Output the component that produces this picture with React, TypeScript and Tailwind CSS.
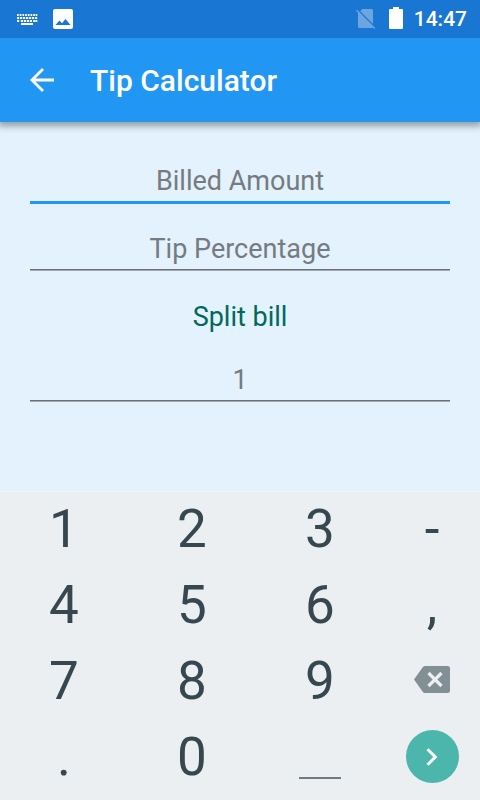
import React from "react";

function StatusBar() {
  return (
    <div className="relative z-10 flex h-[38px] items-center bg-[#1976d2] pl-4 pr-[13px] text-white">
      <svg className="h-[22px] w-[22px]" viewBox="0 0 22 22" fill="currentColor" aria-hidden="true">
        {[1, 3.7, 6.4, 9.1, 11.8, 14.5, 17.2, 19.6].map((x) => (
          <rect key={`a${x}`} x={x} y="6" width="1.7" height="2" />
        ))}
        {[1, 4, 7, 10, 13, 16, 19].map((x) => (
          <rect key={`b${x}`} x={x} y="9" width="2.2" height="2" />
        ))}
        {[1, 4.8, 7.8, 10.8, 13.8, 17.2].map((x) => (
          <rect key={`c${x}`} x={x} y="12" width="2.2" height="2" />
        ))}
        <rect x="19.6" y="12" width="1.7" height="2" />
        <rect x="5" y="15" width="12" height="2" />
      </svg>
      <svg className="ml-[15px] h-5 w-5" viewBox="0 0 20 20" aria-hidden="true">
        <rect width="20" height="20" rx="2" fill="#fff" />
        <path d="M2.5 16 L6.5 11.5 L9 14.3 L12.5 10 L17.5 16 Z" fill="#1976d2" />
      </svg>
      <svg className="ml-auto h-5 w-5" viewBox="0 0 20 20" aria-hidden="true">
        <path
          d="M6.5 0 H15.5 Q17 0 17 1.5 V15 L4.2 2.2 Z M2 3 L17.3 18.3 L16 19 H3.5 Q2 19 2 17.5 Z"
          fill="#6ca6e1"
        />
        <path d="M0.5 1.2 L18.8 19.5" stroke="#6ca6e1" strokeWidth="1.4" />
      </svg>
      <svg className="mb-[2px] ml-[13px] h-[22px] w-[14px]" viewBox="0 0 14 22" fill="currentColor" aria-hidden="true">
        <path d="M4 0 H10 V2 H13 Q14 2 14 3 V21 Q14 22 13 22 H1 Q0 22 0 21 V3 Q0 2 1 2 H4 Z" />
      </svg>
      <time className="ml-[11px] text-[21px] font-medium leading-6">14:47</time>
    </div>
  );
}

function AppBar() {
  return (
    <header className="relative flex h-[84px] items-center bg-[#2196f3] pl-[30px] text-white shadow-[0_2px_7px_2px_rgba(0,0,0,0.36)]">
      <button type="button" aria-label="Back" className="flex h-6 w-6 items-center justify-center">
        <svg className="h-6 w-6" viewBox="0 0 24 24" fill="none" stroke="currentColor" strokeWidth="2.8" aria-hidden="true">
          <path d="M24 12 H2 M13 1 L2 12 L13 23" />
        </svg>
      </button>
      <h1 className="ml-9 pt-[2px] text-[30px] font-medium leading-9">Tip Calculator</h1>
    </header>
  );
}

const fieldBase =
  "block w-full bg-transparent pb-1 text-center text-[27px] leading-8 text-[#37474f] outline-none placeholder:text-[#757b80] placeholder:opacity-100";
const idleField = "h-[37px] border-b border-[#696f74] shadow-[0_1px_0_#a2abb2]";
const activeField = "h-[39px] border-b-[3px] border-[#2196f3]";

function TipForm() {
  return (
    <form className="flex-1 px-[30px] pt-[43px]">
      <input aria-label="Billed Amount" placeholder="Billed Amount" inputMode="decimal" className={`${fieldBase} ${activeField}`} />
      <input aria-label="Tip Percentage" placeholder="Tip Percentage" inputMode="decimal" className={`${fieldBase} ${idleField} mt-[29px]`} />
      <label htmlFor="split" className="mt-[31px] block text-center text-[27px] leading-8 text-[#00695c]">
        Split bill
      </label>
      <input id="split" placeholder="1" inputMode="numeric" className={`${fieldBase} ${idleField} mt-[31px]`} />
    </form>
  );
}

function Key({ label }: { label: string }) {
  return (
    <button type="button" className="flex h-[76px] items-center justify-center pb-[2px] text-[53px] leading-[74px]">
      {label}
    </button>
  );
}

function Keypad() {
  return (
    <div className="grid grid-cols-[4fr_4fr_4fr_3fr] border-t border-[#f3f6f8] bg-[#eceff1] pb-1 text-[#37474f]">
      {["1", "2", "3", "-", "4", "5", "6", ",", "7", "8", "9"].map((k) => (
        <Key key={k} label={k} />
      ))}
      <button type="button" aria-label="Delete" className="flex h-[76px] items-center justify-center pb-[5px]">
        <svg className="h-[27px] w-9" viewBox="0 0 36 27" aria-hidden="true">
          <path d="M11 0 H33.5 Q36 0 36 2.5 V24.5 Q36 27 33.5 27 H11 Q9.5 27 8.5 25.5 L0 13.5 L8.5 1.5 Q9.5 0 11 0 Z" fill="#829095" />
          <path d="M14.5 7 L27.5 20 M27.5 7 L14.5 20" stroke="#eceff1" strokeWidth="3.2" />
        </svg>
      </button>
      <Key label="." />
      <Key label="0" />
      <button type="button" aria-label="Space" className="flex h-[76px] items-end justify-center pb-[17px]">
        <span className="h-[2px] w-[42px] bg-[#6f7b82]" />
      </button>
      <button type="button" aria-label="Next" className="flex h-[76px] items-center justify-center pb-[3px]">
        <span className="flex size-[53px] items-center justify-center rounded-full bg-[#4db6ac]">
          <svg className="h-[18px] w-3" viewBox="0 0 12 18" fill="none" stroke="#fff" strokeWidth="3" aria-hidden="true">
            <path d="M1.5 1.2 L9.3 9 L1.5 16.8" />
          </svg>
        </span>
      </button>
    </div>
  );
}

export default function App() {
  return (
    <main className="flex min-h-screen flex-col bg-[#e3f2fd] font-[Roboto,sans-serif]">
      <StatusBar />
      <AppBar />
      <TipForm />
      <Keypad />
    </main>
  );
}
